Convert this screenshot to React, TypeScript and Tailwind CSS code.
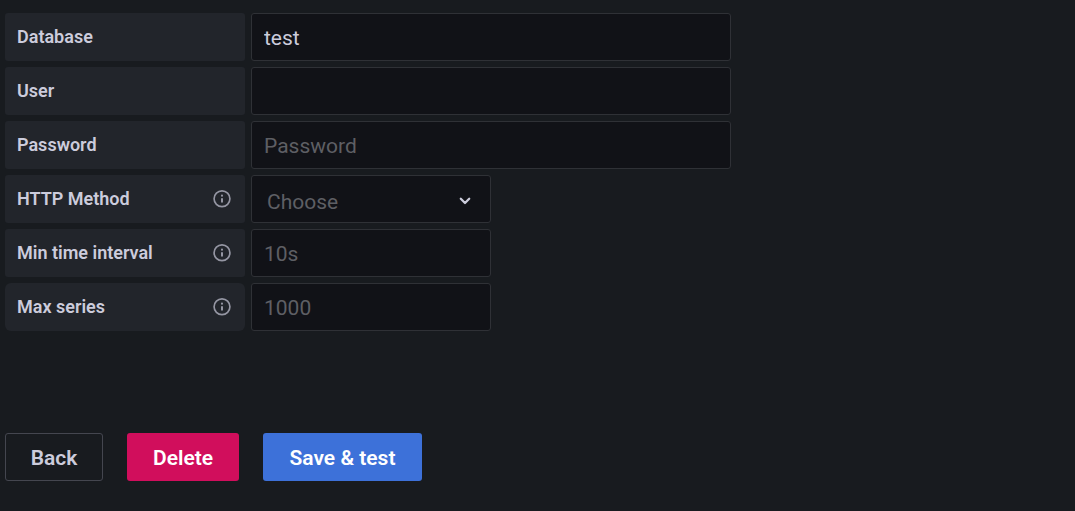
import { useState } from "react";

const label =
  "flex h-12 w-60 shrink-0 items-center justify-between rounded-[3px] bg-[#22252b] pr-[13px] pl-3 text-lg font-semibold text-[#ccccdc]";
const field =
  "h-12 min-w-0 rounded-[3px] border border-[#2f3136] bg-[#111217] px-3 pt-0.5 text-[21px] text-[#ccccdc] outline-none placeholder:text-[#5e5f64] focus:border-[#3d71d9]";

function InfoIcon() {
  return (
    <svg aria-hidden="true" className="size-5 text-[#9596a3]" viewBox="0 0 24 24" fill="currentColor">
      <path d="M12 1.200a10.500 10.500 0 1 0 10.500 10.500A10.500 10.500 0 0 0 12 1.200Zm0 19a8.500 8.500 0 1 1 8.500-8.500 8.500 8.500 0 0 1-8.500 8.500Zm0-9.500a1.200 1.200 0 0 0-1.200 1.200v3.400a1.200 1.200 0 0 0 2.400 0v-3.400a1.200 1.200 0 0 0-1.200-1.200Zm0-4a1.300 1.300 0 1 0 1.300 1.300A1.300 1.300 0 0 0 12 6.700Z" />
    </svg>
  );
}

type RowProps = {
  id: string;
  title: string;
  info?: boolean;
  wide?: boolean;
  last?: boolean;
  type?: string;
  placeholder?: string;
  initial?: string;
};

function Row({ id, title, info, wide, last, type = "text", placeholder, initial = "" }: RowProps) {
  const [value, setValue] = useState(initial);
  return (
    <div className={last ? "flex gap-1.5 [&>label]:rounded-md" : "flex gap-1.5"}>
      <label htmlFor={id} className={label}>
        {title}
        {info && <InfoIcon />}
      </label>
      <input
        id={id}
        type={type}
        placeholder={placeholder}
        value={value}
        onChange={(e) => setValue(e.target.value)}
        className={`${field} ${wide ? "w-[480px]" : "w-60"}`}
      />
    </div>
  );
}

export default function App() {
  return (
    <main className="min-h-screen bg-[#181b1f] px-[5px] pt-[13px] pb-[30px] font-['Roboto',sans-serif]">
      <form onSubmit={(e) => e.preventDefault()}>
        <div className="flex flex-col gap-1.5">
          <Row id="database" title="Database" wide initial="test" />
          <Row id="user" title="User" wide />
          <Row id="password" title="Password" wide type="password" placeholder="Password" />
          <div className="flex gap-1.5">
            <label htmlFor="method" className={label}>
              HTTP Method
              <InfoIcon />
            </label>
            <div className="grid w-60 items-center">
              <select
                id="method"
                defaultValue=""
                className="col-start-1 row-start-1 h-12 w-full appearance-none rounded-[3px] border border-[#2f3136] bg-[#111217] pt-2 pr-10 pl-[15px] text-[21px] text-[#5e5f64] outline-none focus:border-[#3d71d9]"
              >
                <option value="" disabled hidden>Choose</option>
                <option>GET</option>
                <option>POST</option>
              </select>
              <svg aria-hidden="true" className="pointer-events-none col-start-1 row-start-1 mt-1 mr-3.5 size-6 justify-self-end text-[#ccccdc]" viewBox="0 0 24 24" fill="none" stroke="currentColor" strokeWidth="2.3" strokeLinecap="round" strokeLinejoin="round">
                <path d="M7.800 9.800 12 14 16.200 9.800" />
              </svg>
            </div>
          </div>
          <Row id="interval" title="Min time interval" info placeholder="10s" />
          <Row id="series" title="Max series" info last placeholder="1000" />
        </div>
        <div className="mt-[102px] flex gap-6 text-[21px] font-semibold">
          <button type="button" className="h-12 min-w-[98px] rounded-[3px] border border-[#44464f] px-6 pt-1 text-[#ccccdc]">Back</button>
          <button type="button" className="h-12 min-w-28 rounded-[3px] bg-[#d10e5c] px-6 pt-1 text-white">Delete</button>
          <button type="submit" className="h-12 min-w-[159px] rounded-[3px] bg-[#3d71d9] px-6 pt-1 text-white">Save &amp; test</button>
        </div>
      </form>
    </main>
  );
}
